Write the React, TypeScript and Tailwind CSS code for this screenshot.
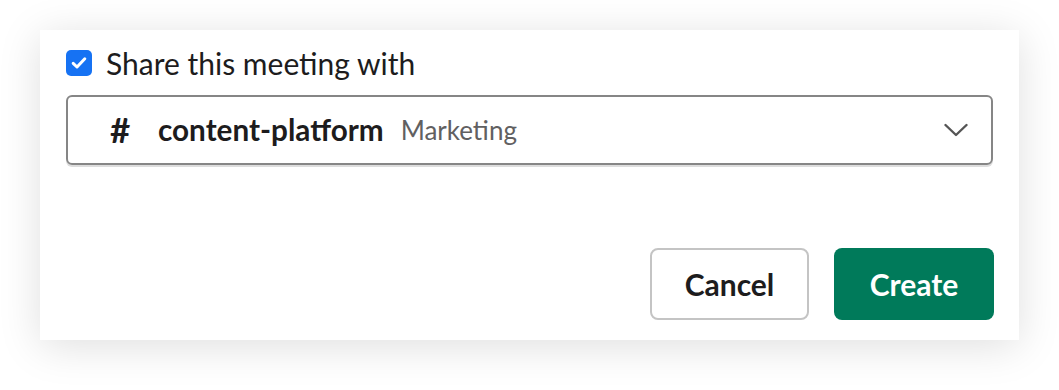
import React from "react";

export default function App() {
  return (
    <div className="w-[1059px] h-[390px] bg-white overflow-hidden" style={{ fontFamily: "Lato, 'Noto Sans', sans-serif" }}>
      <div className="ml-[40px] mt-[30px] w-[979px] h-[310px] bg-white shadow-[0_6px_40px_rgba(0,0,0,0.13)] pl-[26px] pr-[25px] pt-[20px] flex flex-col">
        <div className="flex items-center h-[26px]">
          <div className="w-[26px] h-[26px] rounded-[5px] bg-[#1672f3] flex items-center justify-center">
            <svg width="18" height="18" viewBox="0 0 18 18" fill="none">
              <path d="M3.2 9.4 L7 13 L14.8 4.8" stroke="white" strokeWidth="3" strokeLinecap="round" strokeLinejoin="round" />
            </svg>
          </div>
          <span className="ml-[14px] text-[30px] text-[#1d1c1d] leading-none">Share this meeting with</span>
        </div>
        <div className="mt-[19px] h-[70px] w-[927px] rounded-[6px] border-2 border-[#868686] shadow-[0_2px_0_#dddddd] flex items-center pl-[42px] pr-[23px]">
          <span className="text-[35px] font-bold text-[#1d1c1d] leading-none w-[48px] -mt-[2px]">#</span>
          <span className="text-[29.7px] font-bold text-[#1d1c1d] leading-none">content-platform</span>
          <span className="ml-[17px] text-[26px] text-[#616061] leading-none">Marketing</span>
          <svg className="ml-auto" width="24" height="16" viewBox="0 0 24 16" fill="none">
            <path d="M1.5 3 L12 13 L22.5 3" stroke="#555" strokeWidth="2.4" strokeLinecap="round" strokeLinejoin="round" />
          </svg>
        </div>
        <div className="mt-[83px] flex justify-end gap-[25px]">
          <button className="w-[159px] h-[72px] rounded-[8px] border-2 border-[#c4c4c4] bg-white text-[30px] font-bold text-[#1d1c1d] leading-none">Cancel</button>
          <button className="w-[160px] h-[72px] rounded-[8px] bg-[#007a5a] text-[30px] font-bold text-white leading-none">Create</button>
        </div>
      </div>
    </div>
  );
}
